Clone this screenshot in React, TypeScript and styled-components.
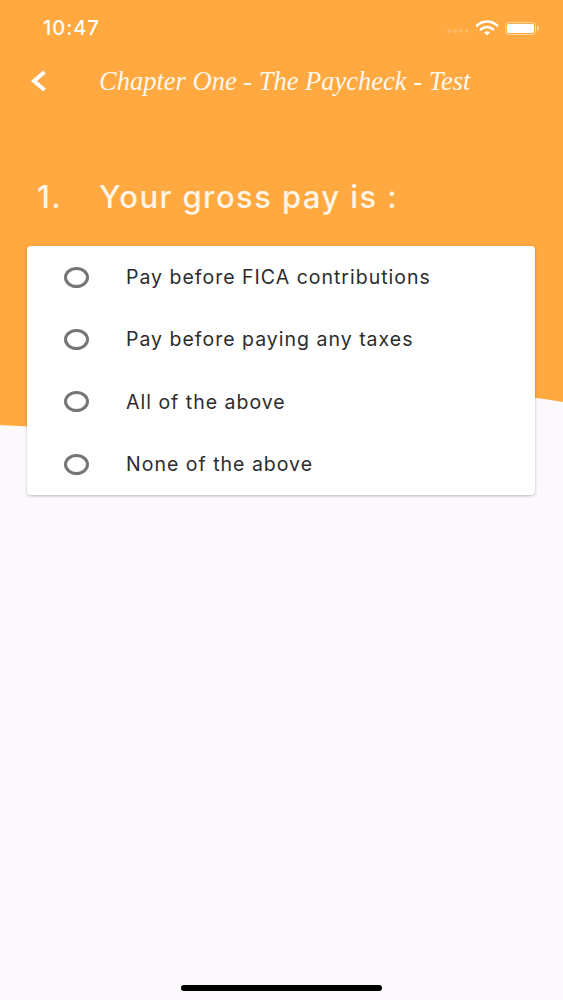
import styled, { createGlobalStyle } from "styled-components";

const options = [
    "Pay before FICA contributions",
    "Pay before paying any taxes",
    "All of the above",
    "None of the above",
];

const GlobalStyle = createGlobalStyle`
    html, body {
        margin: 0;
        padding: 0;
        background: #fbf9fc;
    }
`

const App = () => {
    return (
        <Screen>
            <GlobalStyle />
            <Backdrop viewBox="0 0 563 430" preserveAspectRatio="none">
                <path d="M0 0H563V402C540 398 520 396 480 395C380 392 230 440 0 425Z" fill="#ffa940" />
            </Backdrop>
            <StatusBar>
                <Clock>10:47</Clock>
                <StatusIcons>
                    <Signal>
                        <Dot /><Dot /><Dot /><Dot />
                    </Signal>
                    <svg width="22" height="16" viewBox="0 0 22 16">
                        <path d="M1 5.5C6.8 0.2 15.2 0.2 21 5.5" fill="none" stroke="#fff" strokeWidth="2.6" strokeLinecap="round" />
                        <path d="M5 9.3C8.6 6.3 13.4 6.3 17 9.3" fill="none" stroke="#fff" strokeWidth="2.6" strokeLinecap="round" />
                        <path d="M8 12.4L11 15.4L14 12.4C12.2 10.9 9.8 10.9 8 12.4Z" fill="#fff" />
                    </svg>
                    <Battery>
                        <BatteryFill />
                        <BatteryNub />
                    </Battery>
                </StatusIcons>
            </StatusBar>
            <Header>
                <BackIcon width="18" height="24" viewBox="0 0 18 24">
                    <path d="M14.5 3L4 12L14.5 21" fill="none" stroke="#fff" strokeWidth="4" />
                </BackIcon>
                <Title>Chapter One - The Paycheck - Test</Title>
            </Header>
            <Question>
                <QuestionNumber>1.</QuestionNumber>
                <span>Your gross pay is :</span>
            </Question>
            <Card>
                {options.map((option) => (
                    <OptionRow key={option}>
                        <Radio />
                        <OptionLabel>{option}</OptionLabel>
                    </OptionRow>
                ))}
            </Card>
            <HomeIndicator />
        </Screen>
    )
}

export default App;

const Screen = styled.div`
    position: relative;
    width: 563px;
    height: 1000px;
    overflow: hidden;
    background: #fbf9fc;
    font-family: Inter, "Liberation Sans", sans-serif;
    display: flex;
    flex-direction: column;
`

const Backdrop = styled.svg`
    position: absolute;
    top: 0;
    left: 0;
    width: 563px;
    height: 430px;
`

const StatusBar = styled.div`
    position: relative;
    height: 56px;
    padding: 0 27px 0 43px;
    display: flex;
    align-items: center;
    justify-content: space-between;
    color: white;
`

const Clock = styled.span`
    font-size: 20px;
    font-weight: 500;
    letter-spacing: 1px;
`

const StatusIcons = styled.div`
    display: flex;
    align-items: center;
    gap: 7px;
`

const Signal = styled.div`
    display: flex;
    gap: 2px;
    margin-top: 6px;
`

const Dot = styled.span`
    width: 4px;
    height: 4px;
    border-radius: 50%;
    background: rgba(255, 255, 255, 0.2);
`

const Battery = styled.div`
    position: relative;
    box-sizing: border-box;
    width: 31px;
    height: 13px;
    padding: 1px;
    border: 1px solid rgba(255, 255, 255, 0.5);
    border-radius: 4px;
    display: flex;
`

const BatteryFill = styled.div`
    flex: 1;
    background: white;
    border-radius: 2px;
`

const BatteryNub = styled.span`
    position: absolute;
    right: -4px;
    top: 3px;
    width: 2px;
    height: 5px;
    border-radius: 0 2px 2px 0;
    background: rgba(255, 255, 255, 0.5);
`

const Header = styled.div`
    position: relative;
    height: 50px;
    padding-left: 30px;
    display: flex;
    align-items: center;
    gap: 51px;
`

const BackIcon = styled.svg`
    flex-shrink: 0;
`

const Title = styled.h1`
    margin: 0;
    font-family: "Liberation Serif", serif;
    font-size: 26.5px;
    font-weight: 400;
    font-style: italic;
    color: #fff8ec;
    white-space: nowrap;
`

const Question = styled.div`
    position: relative;
    margin-top: 71px;
    padding-left: 37px;
    display: flex;
    color: #fff5e6;
    font-size: 31px;
    font-weight: 500;
    letter-spacing: 1.4px;
    line-height: 40px;
`

const QuestionNumber = styled.span`
    width: 62px;
`

const Card = styled.div`
    position: relative;
    margin: 29px 28px 0 27px;
    background: white;
    border-radius: 4px;
    box-shadow: 0 1px 3px rgba(0, 0, 0, 0.25);
`

const OptionRow = styled.div`
    height: 62.3px;
    display: flex;
    align-items: center;
    padding-left: 37px;
    gap: 37px;
`

const Radio = styled.span`
    box-sizing: border-box;
    width: 25px;
    height: 21px;
    border: 3px solid #757575;
    border-radius: 50%;
`

const OptionLabel = styled.span`
    font-size: 19.5px;
    letter-spacing: 1px;
    color: #2c2c2e;
`

const HomeIndicator = styled.div`
    position: absolute;
    left: 181px;
    bottom: 9px;
    width: 201px;
    height: 6px;
    border-radius: 3px;
    background: black;
`
